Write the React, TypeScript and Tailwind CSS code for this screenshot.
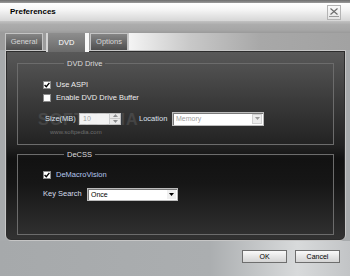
import React from "react"

const tabs = [
  { label: "General", active: false },
  { label: "DVD", active: true },
  { label: "Options", active: false },
]

function Check({ checked }: { checked: boolean }) {
  return (
    <span className="flex h-[8px] w-[8px] shrink-0 items-center justify-center border border-[#8c8c8c] bg-white">
      {checked && (
        <svg width="6" height="6" viewBox="0 0 6 6">
          <path d="M0.6 3.1 L2.3 4.8 L5.4 0.9" stroke="#000" strokeWidth="1.4" fill="none" />
        </svg>
      )}
    </span>
  )
}

function DropArrow({ color }: { color: string }) {
  return (
    <svg width="5" height="3" viewBox="0 0 5 3">
      <path d="M0 0 H5 L2.5 3 Z" fill={color} />
    </svg>
  )
}

export default function App() {
  return (
    <div className="flex h-[276px] w-[350px] flex-col overflow-hidden bg-[#a7aaac] font-['Liberation_Sans',Arial,sans-serif] text-[7.5px] leading-none">
      {/* window top edge */}
      <div className="h-[3px] bg-[linear-gradient(#6c6c6c,#9a9a9a)]" />

      {/* title bar */}
      <div className="flex h-[18px] items-center justify-between bg-[linear-gradient(#ffffff,#f4f4f4_40%,#d6d6d6)] pl-[10px] pr-[9px]">
        <span className="text-[8px] font-bold text-black">Preferences</span>
        <span className="flex h-[15px] w-[14px] flex-col items-center justify-center border border-[#b4b4b4] bg-[linear-gradient(#fafafa,#e4e4e4)]">
          <svg width="8" height="7" viewBox="0 0 8 7">
            <path d="M0.5 0.5 L7.5 6.5 M7.5 0.5 L0.5 6.5" stroke="#6a6a6a" strokeWidth="1.1" />
          </svg>
          <span className="mt-[1px] h-px w-[10px] bg-[#9a9a9a]" />
        </span>
      </div>

      {/* band under title */}
      <div className="h-[12px] bg-[linear-gradient(#c2c2c2,#acacac_30%,#a6a6a6_75%,#9a9a9a)]" />

      {/* tabs */}
      <div className="flex h-[17px] items-stretch bg-[linear-gradient(to_right,#9c9c9c_0,#9c9c9c_128px,#f4f4f4_129px,#c8c8c8_190px,#a8a8a8_260px,#a2a2a2_100%)] pl-[5px]">
        {tabs.map((tab) =>
          tab.active ? (
            <div
              key={tab.label}
              className="relative z-10 -mb-[2px] ml-[3px] flex w-[43px] items-center justify-center border-l-2 border-r-4 border-l-[#d4d4d4] border-r-[#f8f8f8] bg-[linear-gradient(#8e8e8e,#6a6a6a)] text-white"
            >
              {tab.label}
            </div>
          ) : (
            <div
              key={tab.label}
              className={`${tab.label === "Options" ? "ml-[1px]" : ""} flex w-[38px] items-center justify-center border border-b-0 border-[#c4c4c4] bg-[linear-gradient(#858585,#4e4e4e)] text-[#d6d6d6]`}
            >
              {tab.label}
            </div>
          )
        )}
      </div>

      {/* content panel */}
      <div className="ml-[5px] mr-[4px] flex h-[191px] flex-col rounded-b-[6px] border border-[#c6c6c6] bg-[linear-gradient(#595959,#3c3c3c_25%,#222_50%,#121212_57%,#161616_70%,#323232_100%)] px-[11px] pt-[9px] shadow-[inset_0_0_0_1px_#2c2c2c]">
        <fieldset className="relative h-[85px] border border-[#6c6c6c] pl-[25px] pr-[2px]">
          <legend className="ml-[21px] px-[3px] text-[#dcdcdc]">DVD Drive</legend>
          <div className="mt-[13px] flex items-center gap-[5px] text-[#ececec]">
            <Check checked />
            <span>Use ASPI</span>
          </div>
          <div className="mt-[5px] flex items-center gap-[5px] text-[#ececec]">
            <Check checked={false} />
            <span>Enable DVD Drive Buffer</span>
          </div>
          <div className="mt-[10px] flex items-center text-[#dde3ee]">
            <span className="ml-[2px] w-[34px]">Size(MB)</span>
            <div className="flex h-[12px] w-[42px] items-center border border-[#bdbdbd] bg-[#f2f2f2]">
              <span className="flex-1 pl-[3px] text-[7px] text-[#9a9a9a]">10</span>
              <div className="flex h-full w-[11px] flex-col border-l border-[#c8c8c8]">
                <span className="flex flex-1 items-center justify-center bg-[#e8e8e8]">
                  <svg width="5" height="3" viewBox="0 0 5 3"><path d="M0 3 H5 L2.5 0 Z" fill="#8a8a8a" /></svg>
                </span>
                <span className="flex flex-1 items-center justify-center border-t border-[#c8c8c8] bg-[#e8e8e8]">
                  <DropArrow color="#8a8a8a" />
                </span>
              </div>
            </div>
            <span className="ml-[18px] w-[33px]">Location</span>
            <div className="flex h-[14px] w-[92px] items-center border border-[#bcbcbc] bg-white shadow-[inset_1px_1px_0_#7a7a7a]">
              <span className="flex-1 pl-[3px] text-[7px] text-[#a0a0a0]">Memory</span>
              <span className="mr-[1px] flex h-[10px] w-[10px] items-center justify-center border border-[#d0d0d0] bg-[#ececec]">
                <DropArrow color="#9a9a9a" />
              </span>
            </div>
          </div>
          <div className="ml-[7px] mt-[3px] text-[6px] text-[#6e6e6e]">www.softpedia.com</div>
          <span className="pointer-events-none absolute left-[20px] top-[44px] text-[16px] font-bold tracking-[1px] text-white/10">
            SOFTPEDIA
          </span>
        </fieldset>

        <fieldset className="mt-[6px] h-[84px] border border-[#6c6c6c] pl-[25px]">
          <legend className="ml-[21px] px-[3px] text-[#dcdcdc]">DeCSS</legend>
          <div className="mt-[12px] flex items-center gap-[5px] text-[#b4c8ee]">
            <Check checked />
            <span>DeMacroVision</span>
          </div>
          <div className="mt-[9px] flex items-center text-[#d4dcea]">
            <span className="w-[44px]">Key Search</span>
            <div className="flex h-[13px] w-[91px] items-center border border-[#bcbcbc] bg-white shadow-[inset_1px_1px_0_#7a7a7a]">
              <span className="flex-1 pl-[3px] text-[7px] text-black">Once</span>
              <span className="mr-[1px] flex h-[9px] w-[9px] items-center justify-center bg-[#f0f0f0]">
                <DropArrow color="#000" />
              </span>
            </div>
          </div>
        </fieldset>
      </div>

      {/* bottom buttons */}
      <div className="flex flex-1 items-start justify-end gap-[8px] bg-[linear-gradient(to_right,#a6a9ab_0,#abaeb0_60%,#d8dadb_85%,#c2c4c6_100%)] pr-[10px] pt-[9px]">
        {["OK", "Cancel"].map((label) => (
          <button
            key={label}
            className="flex h-[13px] w-[45px] items-center justify-center border border-[#6e6e6e] bg-[linear-gradient(#fafafa,#e6e6e6_50%,#d4d4d4)] text-[7px] text-black"
          >
            {label}
          </button>
        ))}
      </div>
    </div>
  )
}
